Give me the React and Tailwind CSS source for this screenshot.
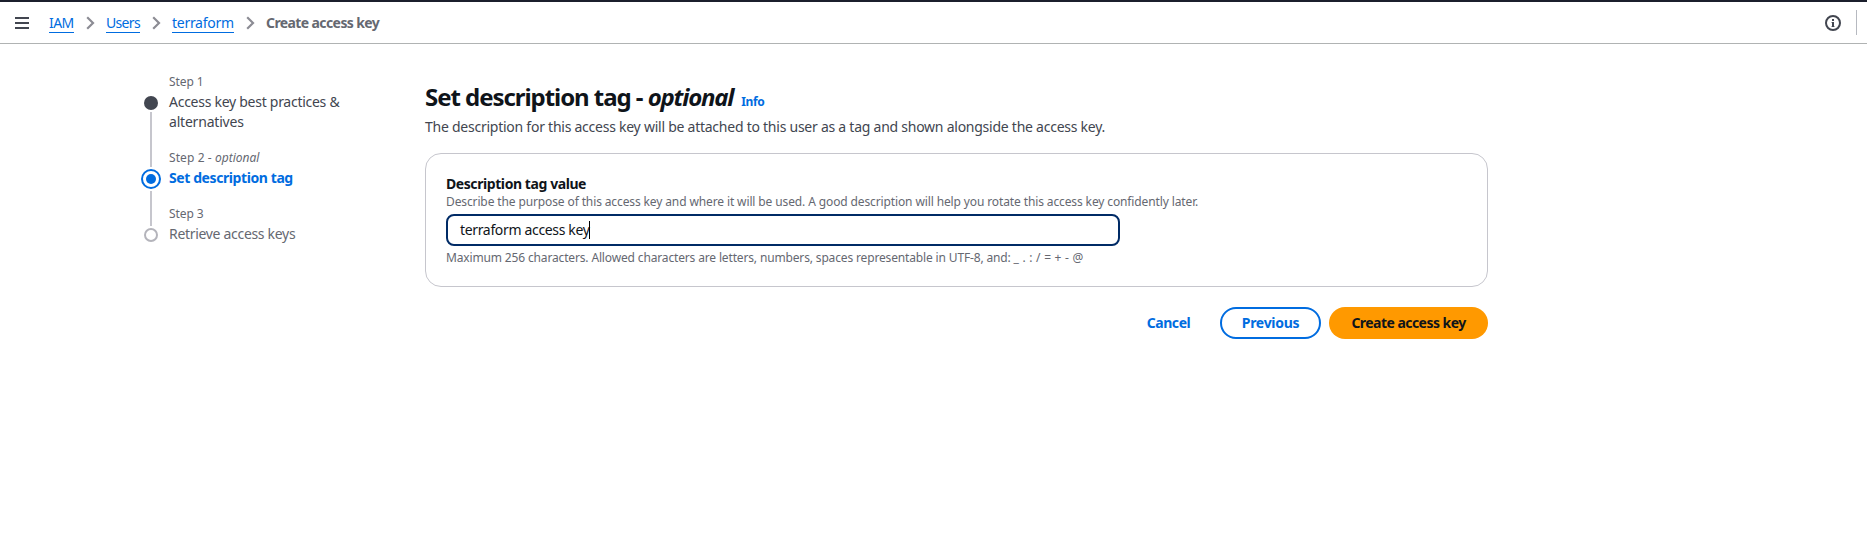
function Chevron({ className }) {
  return (
    <svg className={`shrink-0 ${className}`} width="9" height="14" viewBox="0 0 9 14" fill="none" stroke="#8c8c94" strokeWidth="2.2">
      <path d="M1.2 1.2 7 7 1.2 12.8" />
    </svg>
  );
}

function Crumb({ children, className }) {
  return (
    <a className={`block h-5 shrink-0 whitespace-nowrap border-b border-[#006ce0] text-[14px] leading-[20px] text-[#006ce0] ${className}`}>
      {children}
    </a>
  );
}

function TopBar() {
  return (
    <header className="flex h-11 items-center border-t-2 border-b border-t-[#1b1f2c] border-b-[#b0b3b3] pl-[15px] pr-[10px] pt-px">
      <svg className="shrink-0" width="14" height="12" viewBox="0 0 14 12" fill="#424650">
        <path d="M0 0h14v2H0zM0 5h14v2H0zM0 10h14v2H0z" />
      </svg>
      <nav className="ml-5 flex items-center">
        <Crumb className="w-[25px] tracking-[-0.6px]">IAM</Crumb>
        <Chevron className="ml-3" />
        <Crumb className="ml-[11px] w-[34px] tracking-[-0.66px]">Users</Crumb>
        <Chevron className="ml-3" />
        <Crumb className="ml-[11px] w-[62px] tracking-[-0.28px]">terraform</Crumb>
        <Chevron className="ml-3" />
        <span className="ml-[11px] whitespace-nowrap text-[14px] font-bold leading-[20px] tracking-[-0.6px] text-[#656871]">
          Create access key
        </span>
      </nav>
      <svg className="ml-auto shrink-0" width="16" height="16" viewBox="0 0 16 16" fill="none">
        <circle cx="8" cy="8" r="7" stroke="#424650" strokeWidth="2" />
        <path d="M7 4h2v2H7zM7 7h2v5H7z" fill="#424650" />
        <path d="M6 7h1v1H6zM6 11h4v1H6z" fill="#424650" fillOpacity="0.4" />
      </svg>
      <span className="-mt-px ml-[15px] h-[25px] w-px bg-[#b6b9c0]" />
    </header>
  );
}

function Steps() {
  return (
    <aside className="flex w-[284px] shrink-0 gap-2 pt-[30px]">
      <div className="flex w-5 flex-col items-center gap-0.5 pt-[22px]">
        <span className="size-3.5 rounded-full bg-[#424650]" />
        <span className="h-[55px] w-0.5 bg-[#c6c6cd]" />
        <span className="flex size-5 items-center justify-center rounded-full border-2 border-[#006ce0]">
          <span className="size-2.5 rounded-full bg-[#006ce0]" />
        </span>
        <span className="h-[35px] w-0.5 bg-[#c6c6cd]" />
        <span className="size-3.5 rounded-full border-2 border-[#b4b4bb]" />
      </div>
      <ol className="flex flex-col gap-[18px] whitespace-nowrap text-[14px] leading-[20px]">
        <li>
          <div className="mb-0.5 text-[12px] leading-[16px] tracking-[-0.1px] text-[#656871]">Step 1</div>
          <div className="tracking-[-0.27px] text-[#424650]">Access key best practices &amp;</div>
          <div className="tracking-[-0.2px] text-[#424650]">alternatives</div>
        </li>
        <li>
          <div className="mb-0.5 text-[12px] leading-[16px] text-[#656871]">
            <span className="tracking-[0.1px]">Step 2 - </span>
            <i>optional</i>
          </div>
          <div className="font-bold tracking-[-0.41px] text-[#006ce0]">Set description tag</div>
        </li>
        <li>
          <div className="mb-0.5 text-[12px] leading-[16px] tracking-[-0.1px] text-[#656871]">Step 3</div>
          <div className="tracking-[-0.31px] text-[#656871]">Retrieve access keys</div>
        </li>
      </ol>
    </aside>
  );
}

function DescriptionCard() {
  return (
    <section className="mt-4 h-[134px] rounded-2xl border border-[#c6c6cd] px-5 pt-5">
      <div className="text-[14px] font-bold leading-[20px] tracking-[-0.42px] text-[#0f141a]">Description tag value</div>
      <div className="text-[12px] leading-[16px] tracking-[-0.12px] text-[#656871]">
        Describe the purpose of this access key and where it will be used. A good description will help you rotate this
        access key confidently later.
      </div>
      <div className="mt-1 flex h-8 w-[674px] items-center rounded-lg border-2 border-[#002b66] px-3 text-[14px] leading-[20px] tracking-[-0.34px] text-[#0f141a]">
        <span>terraform access key</span>
        <span className="-ml-px h-[18px] w-px bg-black" />
      </div>
      <div className="mt-1 text-[12px] leading-[16px] tracking-[-0.15px] text-[#656871]">
        Maximum 256 characters. Allowed characters are letters, numbers, spaces representable in UTF-8, and:{' '}
        <span className="tracking-[0.23px]">_ . : / = + - @</span>
      </div>
    </section>
  );
}

export default function App() {
  return (
    <div className="h-[540px] overflow-hidden bg-white font-['Noto_Sans',sans-serif]">
      <TopBar />
      <div className="flex pl-[141px]">
        <Steps />
        <main className="w-[1063px] whitespace-nowrap pt-[38px]">
          <div className="flex items-baseline">
            <h1 className="text-[24px] font-bold leading-[30px] text-[#0f141a]">
              <span className="tracking-[-1.05px]">Set description tag - </span>
              <i className="tracking-[-1.2px]">optional</i>
            </h1>
            <a className="ml-2 text-[12px] font-bold leading-[16px] tracking-[-0.4px] text-[#006ce0]">Info</a>
          </div>
          <p className="mt-[5px] text-[14px] leading-[20px] tracking-[-0.248px] text-[#424650]">
            The description for this access key will be attached to this user as a tag and shown alongside the access key.
          </p>
          <DescriptionCard />
          <div className="mt-5 flex justify-end gap-2 text-[14px] font-bold leading-[20px]">
            <button className="h-8 w-[87px] tracking-[-0.45px] text-[#006ce0]">Cancel</button>
            <button className="h-8 w-[101px] rounded-full border-2 border-[#006ce0] tracking-[-0.3px] text-[#006ce0]">Previous</button>
            <button className="h-8 w-[159px] rounded-full bg-[#ff9900] tracking-[-0.54px] text-[#0f141a]">Create access key</button>
          </div>
        </main>
      </div>
    </div>
  );
}
